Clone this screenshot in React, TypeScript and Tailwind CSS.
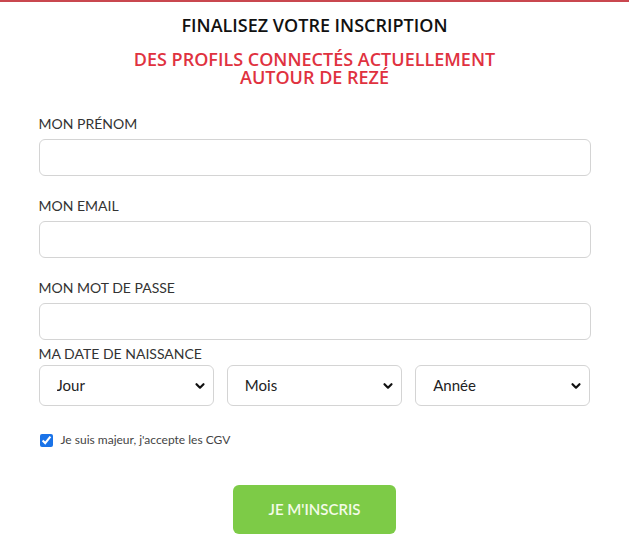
import React from "react";

function Chevron() {
  return (
    <svg className="pointer-events-none absolute right-[8px] top-1/2 -translate-y-1/2" width="12" height="12" viewBox="0 0 12 12">
      <path d="M2.5 4.2 L6 7.7 L9.5 4.2" fill="none" stroke="#111" strokeWidth="2.2" strokeLinecap="round" strokeLinejoin="round" />
    </svg>
  );
}

function Sel({ label }: { label: string }) {
  return (
    <div className="relative flex-1">
      <select className="h-[41px] w-full appearance-none rounded-[6px] border border-[#d4d4d4] bg-white pl-[17px] text-[15px] text-[#222]">
        <option>{label}</option>
      </select>
      <Chevron />
    </div>
  );
}

function Field({ label, type }: { label: string; type: string }) {
  return (
    <div className="flex flex-col">
      <label className="text-[14px] leading-[18px] text-[#333]">{label}</label>
      <input type={type} className="mt-[6px] h-[37px] w-full rounded-[6px] border border-[#d4d4d4] bg-white" />
    </div>
  );
}

export default function App() {
  return (
    <div className="min-h-[545px] bg-white" style={{ fontFamily: "Lato, 'Open Sans', sans-serif" }}>
      <div className="h-[2px] bg-[#c9474f]" />
      <div className="mx-auto flex w-[552px] flex-col">
        <h1 className="mt-[13px] text-center text-[18px] font-semibold leading-[20px] text-[#111]" style={{ fontFamily: "'Open Sans', sans-serif" }}>
          FINALISEZ VOTRE INSCRIPTION
        </h1>
        <h2 className="mt-[15px] text-center text-[18px] font-semibold leading-[18px] text-[#e0323f]" style={{ fontFamily: "'Open Sans', sans-serif" }}>
          DES PROFILS CONNECTÉS ACTUELLEMENT
          <br />
          AUTOUR DE REZÉ
        </h2>
        <div className="mt-[29px] flex flex-col gap-[21px]">
          <Field label="MON PRÉNOM" type="text" />
          <Field label="MON EMAIL" type="email" />
          <Field label="MON MOT DE PASSE" type="password" />
        </div>
        <div className="mt-[5px] text-[14px] leading-[18px] text-[#333]">MA DATE DE NAISSANCE</div>
        <div className="mt-[2px] flex gap-[13px]">
          <Sel label="Jour" />
          <Sel label="Mois" />
          <Sel label="Année" />
        </div>
        <label className="mt-[26px] flex h-[16px] items-center gap-[8px] text-[12px] text-[#444]">
          <input type="checkbox" defaultChecked className="ml-[1px] h-[13px] w-[13px] accent-[#1a73e8]" />
          Je suis majeur, j'accepte les CGV
        </label>
        <div className="mt-[37px] flex justify-center">
          <button className="h-[49px] w-[163px] rounded-[6px] bg-[#7dcb47] text-[15px] font-semibold text-[#f4fbe9]">
            JE M'INSCRIS
          </button>
        </div>
      </div>
    </div>
  );
}
